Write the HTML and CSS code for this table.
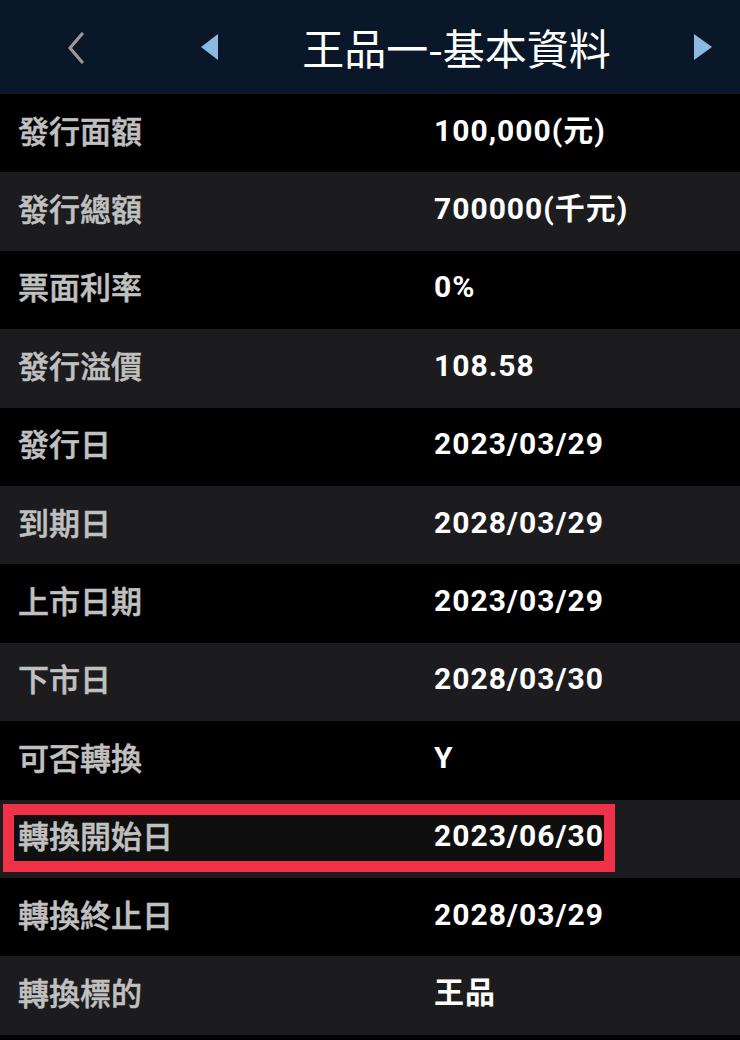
FILE: index.html
```html
<!DOCTYPE html>
<html lang="zh-Hant">
<head>
<meta charset="utf-8">
<title>王品一-基本資料</title>
<link rel="stylesheet" href="styles.css">
</head>
<body>
<header class="topbar">
  <svg class="back" width="18" height="32" viewBox="0 0 18 32" aria-hidden="true"><polyline points="15,2 3,16 15,30" fill="none" stroke="#9a9a9a" stroke-width="3.2" stroke-linecap="round" stroke-linejoin="round"/></svg>
  <svg class="tri tri-left" width="18" height="26" viewBox="0 0 18 26" aria-hidden="true"><polygon points="17,0 17,26 0,13" fill="#8bb9e1"/></svg>
  <h1 class="title">王品一-基本資料</h1>
  <svg class="tri tri-right" width="18" height="26" viewBox="0 0 18 26" aria-hidden="true"><polygon points="0,0 0,26 18,13" fill="#8bb9e1"/></svg>
</header>
<main class="list">
  <div class="row"><span class="label">發行面額</span><span class="value">100,000(元)</span></div>
  <div class="row"><span class="label">發行總額</span><span class="value">700000(千元)</span></div>
  <div class="row"><span class="label">票面利率</span><span class="value">0%</span></div>
  <div class="row"><span class="label">發行溢價</span><span class="value">108.58</span></div>
  <div class="row"><span class="label">發行日</span><span class="value">2023/03/29</span></div>
  <div class="row"><span class="label">到期日</span><span class="value">2028/03/29</span></div>
  <div class="row"><span class="label">上市日期</span><span class="value">2023/03/29</span></div>
  <div class="row"><span class="label">下市日</span><span class="value">2028/03/30</span></div>
  <div class="row"><span class="label">可否轉換</span><span class="value">Y</span></div>
  <div class="row highlighted"><span class="mark"></span><span class="label">轉換開始日</span><span class="value">2023/06/30</span></div>
  <div class="row"><span class="label">轉換終止日</span><span class="value">2028/03/29</span></div>
  <div class="row"><span class="label">轉換標的</span><span class="value">王品</span></div>
</main>
</body>
</html>
```
FILE: styles.css
```css
html, body {
  margin: 0;
  padding: 0;
  background: #000;
}
body {
  width: 740px;
  height: 1040px;
  overflow: hidden;
  font-family: "Noto Sans CJK TC", "Noto Sans", sans-serif;
}
.topbar {
  height: 94px;
  background: #0a1728;
  display: flex;
  align-items: center;
  padding: 0 28px 0 67px;
  box-sizing: border-box;
}
.back {
  display: block;
  margin-top: 1px;
}
.tri-left {
  display: block;
  margin-left: 116px;
}
.tri-right {
  display: block;
}
.title {
  flex: 1;
  margin: 0;
  text-align: center;
  color: #fff;
  font-size: 42px;
  font-weight: 400;
  line-height: 1;
  font-family: "Noto Sans CJK TC", sans-serif;
}
.list {
  display: flex;
  flex-direction: column;
}
.row {
  position: relative;
  height: 78.4px;
  display: grid;
  grid-template-columns: 434px 1fr;
  align-items: center;
  background: #000;
}
.row:nth-child(even) {
  background: #1c1c1e;
}
.label {
  position: relative;
  padding-left: 18px;
  color: #c0c0c0;
  font-size: 31px;
  font-weight: 500;
  line-height: 1;
  margin-top: -8px;
  -webkit-text-stroke: 0.5px #c0c0c0;
}
.value {
  position: relative;
  color: #fff;
  font-family: Roboto, "Noto Sans CJK TC", sans-serif;
  font-size: 30px;
  font-weight: 700;
  line-height: 1;
  letter-spacing: 1px;
  margin-top: -5px;
}
.mark {
  position: absolute;
  left: 3px;
  top: 4px;
  width: 612px;
  height: 68px;
  box-sizing: border-box;
  border: 11px solid #ef3249;
  background: #0f0f10;
}
```
